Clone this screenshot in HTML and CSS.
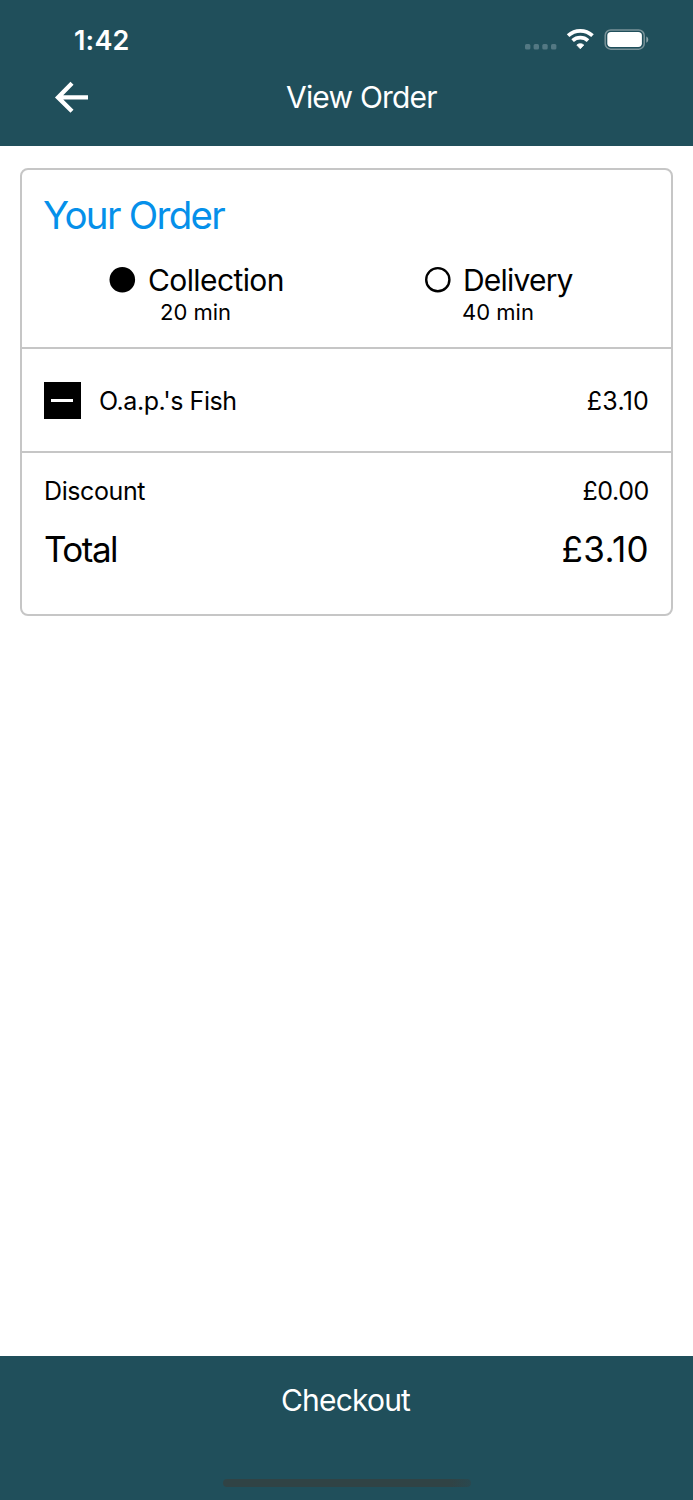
FILE: index.html
```
<!DOCTYPE html>
<html lang="en">
<head>
<meta charset="utf-8">
<title>View Order</title>
<link rel="stylesheet" href="styles.css">
</head>
<body>
<div class="screen">
  <header class="header">
    <div class="status">
      <span class="time">1:42</span>
      <svg class="status-icons" width="126" height="24" viewBox="0 0 126 24">
        <g fill="#537883"><rect x="1" y="16" width="5.4" height="5.4" rx="1.5"/><rect x="9.6" y="16" width="5.4" height="5.4" rx="1.5"/><rect x="18.3" y="16" width="5.4" height="5.4" rx="1.5"/><rect x="27" y="16" width="5.4" height="5.4" rx="1.5"/></g>
        <g fill="none" stroke="#fff">
          <path d="M44.1 7.6C51.2 1.2 61.4 1.2 68.5 7.6" stroke-width="3.8"/>
          <path d="M48.6 12.6C53 8.7 59.6 8.7 64 12.6" stroke-width="3.8"/>
        </g>
        <path d="M52.8 17C55 15.2 57.6 15.2 59.8 17L56.3 20.8Z" fill="#fff" stroke="#fff" stroke-width=".8" stroke-linejoin="round"/>
        <rect x="81.2" y="2" width="39" height="19.2" rx="5.5" fill="none" stroke="#789299" stroke-width="1.5"/>
        <rect x="83.3" y="4" width="34.6" height="15" rx="3.7" fill="#fff"/>
        <path d="M122.3 8.6V14.8C124.9 13.6 124.9 9.8 122.3 8.6Z" fill="#8ba2a8"/>
      </svg>
    </div>
    <div class="nav">
      <svg class="back" width="36" height="36" viewBox="0 0 36 36" fill="none" stroke="#fff" stroke-width="4.3"><path d="M18 4.2 4 18.4 18 32.2M4.5 18.4H34"/></svg>
      <h1 class="title">View Order</h1>
    </div>
  </header>

  <main class="content">
    <section class="card">
      <div class="order">
        <h2 class="heading">Your Order</h2>
        <div class="options">
          <div class="option collection">
            <div class="choice"><svg class="radio" viewBox="0 0 26 26"><circle cx="13.3" cy="12.7" r="12.8"/></svg><span class="label">Collection</span></div>
            <div class="wait">20 min</div>
          </div>
          <div class="option delivery">
            <div class="choice"><svg class="radio" viewBox="0 0 26 26"><circle cx="12.8" cy="12.7" r="11.6" fill="none" stroke="#000" stroke-width="2.4"/></svg><span class="label">Delivery</span></div>
            <div class="wait">40 min</div>
          </div>
        </div>
      </div>
      <div class="item">
        <span class="remove"><span class="minus"></span></span>
        <span class="item-name">O.a.p.'s Fish</span>
        <span class="price">£3.10</span>
      </div>
      <div class="totals">
        <div class="row"><span class="discount">Discount</span><span class="price reduction">£0.00</span></div>
        <div class="row total"><span class="total-label">Total</span><span class="total-price">£3.10</span></div>
      </div>
    </section>
  </main>

  <footer class="footer">
    <div class="checkout">Checkout</div>
    <div class="home-bar"></div>
  </footer>
</div>
</body>
</html>
```
FILE: styles.css
```
* { box-sizing: border-box; }
body {
  margin: 0;
  background: #fff;
  color: #000;
  font-family: Inter, "Liberation Sans", sans-serif;
}
h1, h2 { margin: 0; font-weight: 400; }
.screen { display: flex; flex-direction: column; height: 1500px; }

.header { height: 146px; background: #204f5b; color: #fff; }
.status {
  display: flex;
  justify-content: space-between;
  align-items: center;
  height: 79px;
  padding: 0 43px 0 74px;
}
.time { padding-top: 2px; font-size: 27px; font-weight: 600; line-height: 36px; letter-spacing: 0.2px; }
.nav { display: flex; align-items: center; height: 36px; padding-left: 54px; }
.title { margin-left: 196px; font-size: 30px; line-height: 36px; letter-spacing: -0.8px; white-space: nowrap; }

.content { flex: 1; padding: 22px 20px 0; }
.card { height: 448px; border: 2px solid #c6c6c6; border-radius: 8px; }
.order { height: 179px; padding: 22px 22px 0 21px; border-bottom: 2px solid #c6c6c6; }
.heading { font-size: 38.5px; line-height: 47px; letter-spacing: -1.7px; color: #0590ea; }
.options { display: flex; padding-top: 25px; padding-left: 1px; }
.option { flex: none; }
.collection { width: 315px; padding-left: 65px; }
.delivery { padding-left: 66px; }
.choice { display: flex; align-items: center; height: 32px; gap: 13px; }
.radio { width: 26px; height: 26px; overflow: visible; }
.label { font-size: 30px; line-height: 36px; letter-spacing: -0.6px; }
.delivery .choice { gap: 12px; }
.delivery .label { letter-spacing: -0.8px; }
.wait { padding-left: 51px; font-size: 22px; line-height: 32px; }
.delivery .wait { padding-left: 37px; }

.item { display: flex; align-items: center; height: 104px; padding: 0 22px; border-bottom: 2px solid #c6c6c6; }
.remove { display: flex; align-items: center; justify-content: center; width: 37px; height: 37px; padding-right: 1px; background: #000; }
.minus { width: 22px; height: 3px; background: #fff; }
.item-name { margin-left: 18px; padding-top: 2px; font-size: 25px; line-height: 32px; letter-spacing: -0.45px; }
.price { margin-left: auto; font-size: 25px; line-height: 32px; letter-spacing: 0.2px; }
.item .price { padding-top: 2px; }

.totals { padding: 22px 22px 0; }
.row { display: flex; align-items: center; height: 32px; }
.discount { font-size: 25px; line-height: 32px; letter-spacing: -0.4px; }
.reduction { letter-spacing: -0.4px; }
.total { height: 44px; margin-top: 20px; font-size: 35px; line-height: 44px; }
.total-label { letter-spacing: -1.5px; }
.total-price { margin-left: auto; letter-spacing: 0.4px; }

.footer { display: flex; flex-direction: column; align-items: center; height: 144px; padding-top: 24px; background: #204f5b; color: #fff; }
.checkout { padding-right: 2px; font-size: 30px; line-height: 40px; letter-spacing: -0.8px; }
.home-bar { width: 248px; height: 8px; margin-top: 59px; border-radius: 4px; background: linear-gradient(90deg, #304345 92%, #29484f); }
```
